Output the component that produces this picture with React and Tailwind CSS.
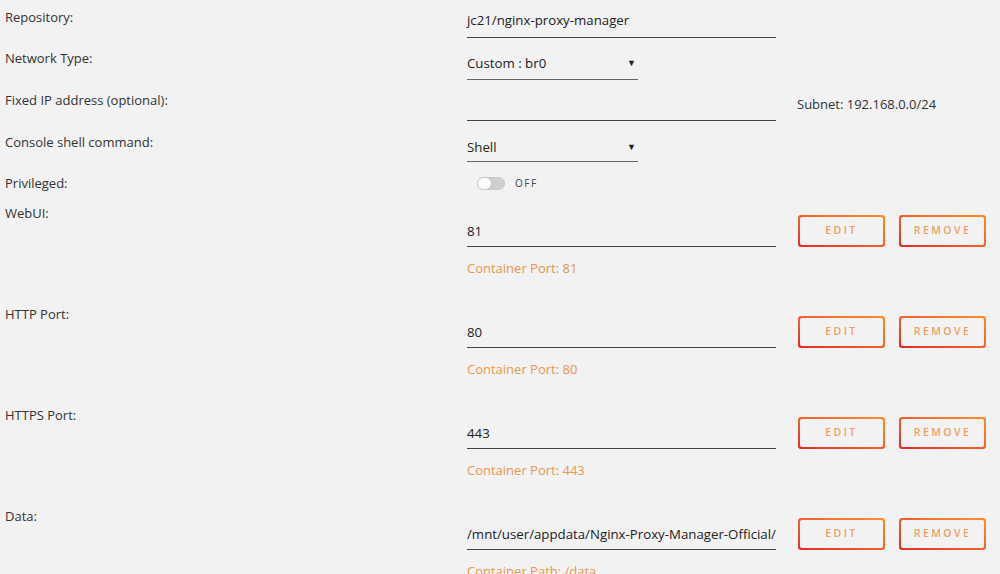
import React from "react";

const font = { fontFamily: '"Open Sans", "Noto Sans", sans-serif' };

function Label({ children }) {
  return (
    <div className="w-[467px] shrink-0 pl-[5px] pt-[7px] text-[13px] leading-[20px] text-[#333]">
      {children}
    </div>
  );
}

function Btn({ children }) {
  return (
    <div className="rounded-[3px] bg-linear-to-tr from-[#e22828] to-[#ff8c2f] p-[2px]">
      <div className="flex h-[28px] w-[83px] items-center justify-center rounded-[2px] bg-[#f2f2f2] text-[10.5px] font-semibold tracking-[2.4px] text-[#eba064]">
        {children}
      </div>
    </div>
  );
}

function PortRow({ label, value, sub }) {
  return (
    <div className="flex h-[101px]">
      <Label>{label}</Label>
      <div className="flex flex-col">
        <div className="flex items-start">
          <div className="mt-[25px] w-[309px] border-b border-[#444] pb-[5px] text-[13.25px] leading-[20px] text-[#222] whitespace-nowrap overflow-hidden">
            {value}
          </div>
          <div className="ml-[22px] mt-[19px] flex gap-[14px]">
            <Btn>EDIT</Btn>
            <Btn>REMOVE</Btn>
          </div>
        </div>
        <div className="mt-[11px] text-[13px] leading-[20px] text-[#e8974f]">{sub}</div>
      </div>
    </div>
  );
}

export default function App() {
  return (
    <div className="h-[574px] w-[1000px] overflow-hidden bg-[#f2f2f2]" style={font}>
      <div className="flex h-[41px]">
        <Label>Repository:</Label>
        <div className="mt-[10px] h-[28px] w-[309px] border-b border-[#444] text-[13.25px] leading-[20px] text-[#222]">
          jc21/nginx-proxy-manager
        </div>
      </div>
      <div className="flex h-[42px]">
        <Label>Network Type:</Label>
        <div className="mt-[12px] flex h-[27px] w-[171px] items-start justify-between border-b border-[#666] text-[13.25px] leading-[20px] text-[#222]">
          <span>Custom : br0</span>
          <span className="mr-[2px] text-[9px] leading-[20px]">▼</span>
        </div>
      </div>
      <div className="flex h-[42px]">
        <Label>Fixed IP address (optional):</Label>
        <div className="mt-[10px] h-[28px] w-[309px] border-b border-[#444]" />
        <div className="ml-[21px] mt-[11px] text-[13px] leading-[20px] text-[#333]">Subnet: 192.168.0.0/24</div>
      </div>
      <div className="flex h-[41px]">
        <Label>Console shell command:</Label>
        <div className="mt-[12px] flex h-[25px] w-[171px] items-start justify-between border-b border-[#666] text-[13.25px] leading-[20px] text-[#222]">
          <span>Shell</span>
          <span className="mr-[2px] text-[9px] leading-[20px]">▼</span>
        </div>
      </div>
      <div className="flex h-[30px]">
        <Label>Privileged:</Label>
        <div className="mt-[10px] ml-[10px] flex h-[14px] items-center">
          <div className="relative h-[13px] w-[28px] rounded-full border border-[#c8c8c8] bg-[#cfcfcf]">
            <div className="absolute left-[-1px] top-[-1px] h-[13px] w-[15px] rounded-full border border-[#c8c8c8] bg-white" />
          </div>
          <span className="ml-[10px] text-[10px] tracking-[1.5px] text-[#444]">OFF</span>
        </div>
      </div>
      <PortRow label="WebUI:" value="81" sub="Container Port: 81" />
      <PortRow label="HTTP Port:" value="80" sub="Container Port: 80" />
      <PortRow label="HTTPS Port:" value="443" sub="Container Port: 443" />
      <PortRow label="Data:" value="/mnt/user/appdata/Nginx-Proxy-Manager-Official/" sub="Container Path: /data" />
    </div>
  );
}
